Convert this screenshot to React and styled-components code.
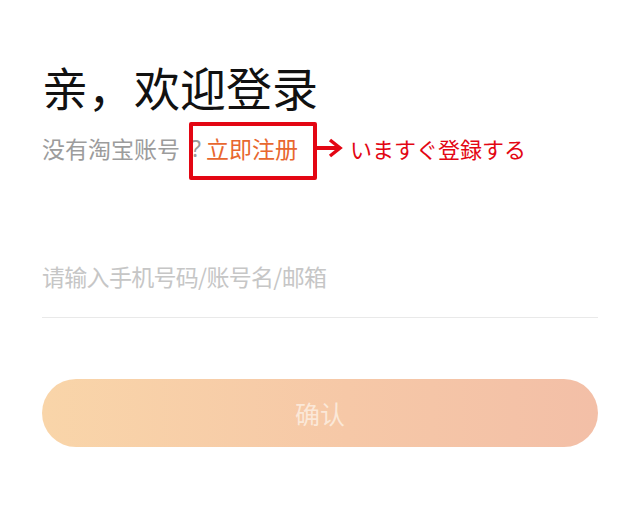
import React from 'react';
import styled, { createGlobalStyle } from 'styled-components';

const GlobalStyle = createGlobalStyle`
  html, body {
    margin: 0;
    padding: 0;
    background: #fff;
  }
  body {
    font-family: "Noto Sans CJK SC", "Noto Sans", sans-serif;
  }
`;

const Page = styled.div`
  display: flex;
  flex-direction: column;
  padding: 58px 42px 0 42px;
`;

const Title = styled.h1`
  margin: 0;
  font-size: 46px;
  line-height: 56px;
  font-weight: 400;
  color: #111;
`;

// full-width comma cell, so it keeps a whole em
const Comma = styled.span`
  display: inline-block;
  width: 1em;
`;

const SignupRow = styled.div`
  display: flex;
  align-items: center;
  margin-top: 18px;
  height: 32px;
  font-size: 23px;
  line-height: 32px;
`;

const Muted = styled.span`
  color: #9c9c9c;
`;

const Question = styled.span`
  margin-left: 11px;
  color: #9c9c9c;
  font-family: "Noto Sans", sans-serif;
`;

const Register = styled.span`
  position: relative;
  margin-left: 5px;
  color: #e8672f;

  /* annotation box drawn over the link */
  &::after {
    content: '';
    position: absolute;
    left: -17px;
    right: -19px;
    top: -10px;
    bottom: -16px;
    border: 4px solid #e30613;
    border-radius: 2px;
  }
`;

const Note = styled.span`
  display: flex;
  align-items: center;
  margin-left: 15px;
  gap: 7px;
  color: #e30613;
  font-size: 22px;
  font-family: "Noto Sans CJK JP", "Noto Sans CJK SC", sans-serif;
`;

const Arrow = () => (
  <svg width="30" height="20" viewBox="0 0 30 20">
    <line x1="0" y1="10" x2="27" y2="10" stroke="#e30613" strokeWidth="4" />
    <polyline points="17,2 27,10 17,18" fill="none" stroke="#e30613" strokeWidth="3.5" />
  </svg>
);

const Field = styled.div`
  display: flex;
  align-items: center;
  margin-top: 84px;
  padding-bottom: 13px;
  border-bottom: 1px solid #e9e9e9;
`;

const Input = styled.input`
  flex: 1;
  height: 56px;
  border: none;
  outline: none;
  padding: 0;
  background: transparent;
  font-family: inherit;
  font-size: 23px;
  letter-spacing: -0.7px;
  color: #333;

  &::placeholder {
    color: #c6c6c6;
  }
`;

const Confirm = styled.button`
  margin-top: 61px;
  height: 68px;
  border: none;
  border-radius: 34px;
  background: linear-gradient(90deg, #f9d5a9 0%, #f6c8a7 55%, #f3bfa7 100%);
  color: #fbe8d8;
  font-family: inherit;
  font-size: 25px;
`;

export default function App() {
  return (
    <>
      <GlobalStyle />
      <Page>
        <Title>
          亲<Comma>，</Comma>欢迎登录
        </Title>
        <SignupRow>
          <Muted>没有淘宝账号</Muted>
          <Question>?</Question>
          <Register>立即注册</Register>
          <Note>
            <Arrow />
            いますぐ登録する
          </Note>
        </SignupRow>
        <Field>
          <Input placeholder="请输入手机号码/账号名/邮箱" />
        </Field>
        <Confirm>确认</Confirm>
      </Page>
    </>
  );
}
